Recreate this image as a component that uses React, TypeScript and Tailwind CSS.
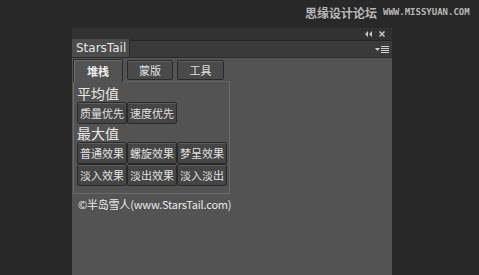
import React from 'react';

const btn =
  'h-[22px] w-[50px] flex items-center justify-center text-[11px] text-[#e0e0e0] bg-[#454545] border border-[#2a2a2a] rounded-[2px] shadow-[inset_0_1px_0_#5e5e5e]';

function Btn({ label }: { label: string }) {
  return <div className={btn}>{label}</div>;
}

export default function App() {
  return (
    <div
      className="w-[479px] h-[275px] bg-[#282828] relative overflow-hidden"
      style={{ fontFamily: '"Noto Sans CJK SC", "Liberation Sans", sans-serif' }}
    >
      {/* watermark */}
      <div className="absolute left-[305px] top-[4px] flex items-center gap-[6px] text-[#b8b8b8] whitespace-nowrap">
        <span className="text-[12px] font-bold">思缘设计论坛</span>
        <span className="text-[9px] font-bold" style={{ fontFamily: '"DejaVu Sans Mono", monospace' }}>
          WWW.MISSYUAN.COM
        </span>
      </div>

      <div className="absolute left-[72px] top-[28px] w-[320px] h-[247px] flex flex-col bg-[#535353]">
        {/* top bar */}
        <div className="h-[12px] bg-[#323232] flex items-center justify-end gap-[7px] pr-[7px] text-[#c8c8c8]">
          <svg width="7" height="6" viewBox="0 0 7 6">
            <path d="M3 0 L0 3 L3 6 Z M7 0 L4 3 L7 6 Z" fill="#c8c8c8" />
          </svg>
          <svg width="6" height="6" viewBox="0 0 6 6">
            <path d="M0.5 0.5 L5.5 5.5 M5.5 0.5 L0.5 5.5" stroke="#c8c8c8" strokeWidth="1.5" />
          </svg>
        </div>
        {/* tab strip */}
        <div className="h-[18px] bg-[#3a3a3a] border-t border-[#262626] border-b border-b-[#2a2a2a] flex items-end justify-between">
          <div
            className="h-[18px] w-[58px] bg-[#4c4c4c] border-r border-[#2a2a2a] flex items-center pl-[4px] text-[12px] text-[#e6e6e6]"
            style={{ fontFamily: '"DejaVu Sans", sans-serif' }}
          >
            StarsTail
          </div>
          <div className="flex items-center h-full pr-[3px] gap-[1px]">
            <svg width="5" height="3" viewBox="0 0 5 3">
              <path d="M0 0 L5 0 L2.5 3 Z" fill="#d0d0d0" />
            </svg>
            <svg width="8" height="7" viewBox="0 0 8 7">
              <path d="M0 0.5 H8 M0 2.5 H8 M0 4.5 H8 M0 6.5 H8" stroke="#d0d0d0" strokeWidth="1" />
            </svg>
          </div>
        </div>

        {/* body */}
        <div className="pl-[1px] pt-[2px]">
          <div className="flex items-end gap-[4px] h-[22px]">
            <div className="h-[23px] w-[50px] bg-[#535353] border border-[#2c2c2c] border-b-0 rounded-t-[2px] flex items-center justify-center text-[11px] font-bold text-[#f0f0f0] relative z-10 shadow-[inset_1px_1px_0_#6a6a6a]">
              堆栈
            </div>
            <div className="h-[20px] w-[46px] mb-[2px] bg-[#4a4a4a] border border-[#2a2a2a] rounded-[2px] flex items-center justify-center text-[11px] text-[#e0e0e0] shadow-[inset_0_1px_0_#606060]">
              蒙版
            </div>
            <div className="h-[20px] w-[47px] mb-[2px] bg-[#4a4a4a] border border-[#2a2a2a] rounded-[2px] flex items-center justify-center text-[11px] text-[#e0e0e0] shadow-[inset_0_1px_0_#606060]">
              工具
            </div>
          </div>
          <div className="w-[157px] h-[113px] border border-[#6a6a6a] border-t-[#5f5f5f] -mt-[1px] pl-[3px] pt-[3px]">
            <div className="text-[14px] leading-[17px] text-[#e8e8e8]">平均值</div>
            <div className="flex">
              <Btn label="质量优先" />
              <Btn label="速度优先" />
            </div>
            <div className="text-[14px] leading-[17px] text-[#e8e8e8] mt-[1px]">最大值</div>
            <div className="flex">
              <Btn label="普通效果" />
              <Btn label="螺旋效果" />
              <Btn label="梦呈效果" />
            </div>
            <div className="flex">
              <Btn label="淡入效果" />
              <Btn label="淡出效果" />
              <Btn label="淡入淡出" />
            </div>
          </div>
          <div className="mt-[2px] pl-[5px] text-[11px] text-[#e8e8e8] tracking-[-0.2px]">
            ©半岛雪人(www.StarsTail.com)
          </div>
        </div>
      </div>
    </div>
  );
}
